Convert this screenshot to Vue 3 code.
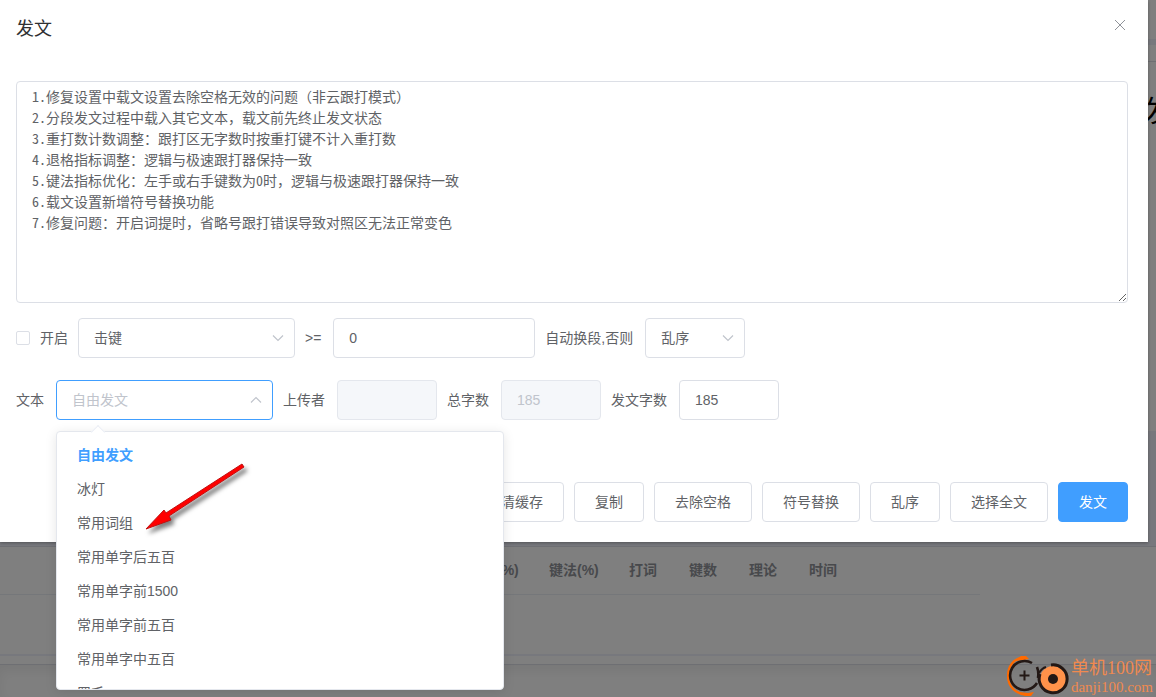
<script setup>
import { ref } from 'vue'

const content = ref([
  '1.修复设置中载文设置去除空格无效的问题（非云跟打模式）',
  '2.分段发文过程中载入其它文本，载文前先终止发文状态',
  '3.重打数计数调整：跟打区无字数时按重打键不计入重打数',
  '4.退格指标调整：逻辑与极速跟打器保持一致',
  '5.键法指标优化：左手或右手键数为0时，逻辑与极速跟打器保持一致',
  '6.载文设置新增符号替换功能',
  '7.修复问题：开启词提时，省略号跟打错误导致对照区无法正常变色'
].join('\n'))

const enabled = ref(false)
const metric = ref('击键')
const threshold = ref('0')
const fallback = ref('乱序')
const source = ref('自由发文')
const uploader = ref('')
const total = ref('185')
const amount = ref('185')

const options = ['自由发文', '冰灯', '常用词组', '常用单字后五百', '常用单字前1500', '常用单字前五百', '常用单字中五百', '罗毛']
const actions = ['清缓存', '复制', '去除空格', '符号替换', '乱序', '选择全文']
const columns = ['键准(%)', '键法(%)', '打词', '键数', '理论', '时间']
</script>

<template>
  <div class="page">
    <div class="backdrop">
      <div class="navbar"></div>
      <div class="titlebar"></div>
      <div class="article"><span>发</span></div>
      <div class="splitter"></div>
      <div class="records">
        <table>
          <thead>
            <tr>
              <th class="lead"></th>
              <th v-for="c in columns" :key="c" :class="{ wide: c.includes('%') }">{{ c }}</th>
              <th class="tail"></th>
            </tr>
          </thead>
        </table>
      </div>
      <div class="footbar"></div>
      <div class="below"></div>
    </div>
    <div class="mask"></div>

    <section class="dialog" role="dialog" aria-labelledby="dialog-title">
      <header>
        <h1 id="dialog-title">发文</h1>
        <button class="close" type="button" aria-label="关闭">
          <svg viewBox="0 0 12 12" width="12" height="12"><path d="M1 1 11 11M11 1 1 11" /></svg>
        </button>
      </header>

      <textarea v-model="content" aria-label="发文内容" spellcheck="false"></textarea>

      <div class="row">
        <label class="check"><input v-model="enabled" type="checkbox" />开启</label>
        <div class="select medium">
          <select v-model="metric" aria-label="指标"><option>击键</option></select>
          <svg viewBox="0 0 12 12"><path d="M1 3.5 6 8.5 11 3.5" /></svg>
        </div>
        <label class="caption" for="threshold">&gt;=</label>
        <input id="threshold" v-model="threshold" class="field large" type="text" />
        <label class="caption" for="fallback">自动换段,否则</label>
        <div class="select small">
          <select id="fallback" v-model="fallback"><option>乱序</option></select>
          <svg viewBox="0 0 12 12"><path d="M1 3.5 6 8.5 11 3.5" /></svg>
        </div>
      </div>

      <div class="row second">
        <label class="caption" for="source">文本</label>
        <div class="select medium open">
          <select id="source" v-model="source">
            <option v-for="o in options" :key="o">{{ o }}</option>
          </select>
          <svg viewBox="0 0 12 12"><path d="M1 8.5 6 3.5 11 8.5" /></svg>
          <div class="dropdown">
            <ul role="listbox" aria-label="文本">
              <li v-for="o in options" :key="o" role="option" :aria-selected="o === source" :class="{ selected: o === source }">{{ o }}</li>
            </ul>
            <svg class="arrow" viewBox="0 0 102 70" aria-hidden="true">
              <path d="M99 2 101 5 26 54 28 58 3 67 21 48 23 51Z" />
            </svg>
          </div>
        </div>
        <label class="caption" for="uploader">上传者</label>
        <input id="uploader" v-model="uploader" class="field small" type="text" disabled />
        <label class="caption" for="total">总字数</label>
        <input id="total" v-model="total" class="field small" type="text" disabled />
        <label class="caption" for="amount">发文字数</label>
        <input id="amount" v-model="amount" class="field small" type="text" />
      </div>

      <footer>
        <button v-for="a in actions" :key="a" type="button">{{ a }}</button>
        <button class="primary" type="button">发文</button>
      </footer>
    </section>

    <div class="brand">
      <svg viewBox="0 0 66 42" width="66" height="42" aria-hidden="true">
        <path d="M22 2C10 3 5 12 5 21c0 11 8 18 19 19" fill="none" stroke="#ff6a00" stroke-width="2.200" />
        <path d="M12 6 18 1h5l3 3-6 1zM16 37l9 1 6-1-3 4h-6z" fill="#ff6a00" />
        <path d="M29 8A14.500 14.500 0 1 0 34 28M34 12q2 5 1 11" fill="none" stroke="#231815" stroke-width="2.600" />
        <path d="M21.500 15.500v10M16.500 20.500h10" stroke="#231815" stroke-width="2" />
        <circle cx="50" cy="24" r="13" fill="#ff924a" />
        <path d="M48 10A14 14 0 1 1 37 19" fill="none" stroke="#231815" stroke-width="3" />
        <path d="M36 18q3-5 7-6" fill="none" stroke="#231815" stroke-width="2" />
        <circle cx="50" cy="24" r="5" fill="#231815" />
      </svg>
      <div class="brand-text"><span>单机100网</span><span class="url">danji100.com</span></div>
    </div>
  </div>
</template>

<style>
html, body, #app { height: 100%; }
body { margin: 0; overflow: hidden; }
</style>

<style scoped>
* { box-sizing: border-box; }
.page {
  position: relative;
  height: 100%;
  overflow: hidden;
  color: #606266;
  font: 14px/20px "Liberation Sans", "Noto Sans CJK SC", sans-serif;
}
.backdrop {
  position: absolute;
  inset: 0;
  display: flex;
  flex-direction: column;
  background: #fff;
}
.mask { position: absolute; inset: 0; background: rgba(0, 0, 0, .5); }
.navbar { height: 39px; }
.titlebar { height: 23px; border-top: 6px solid #eef0fa; border-bottom: 1px solid #dcdfe6; }
.article { flex: 1; color: #000; font-size: 30px; line-height: 98px; text-align: right; }
.article span { margin-right: -18px; }
.splitter { height: 116px; background: #eef0fa; border-bottom: 1px solid #dcdfe6; }
.records { height: 107px; }
.records table { width: 980px; table-layout: fixed; border-collapse: collapse; }
.records th { width: 60px; height: 47px; padding: 0 10px; border-bottom: 1px solid #ebeef5; color: #909399; text-align: left; white-space: nowrap; }
.records .wide { width: 80px; }
.records .lead { width: 459px; }
.records .tail { width: auto; }
.footbar { height: 11px; border-top: 2px solid #eef0fa; border-bottom: 1px solid #dcdfe6; }
.below { height: 32px; box-shadow: inset 0 6px 12px rgba(0, 0, 0, .06); }

.dialog {
  position: relative;
  width: calc(100% - 8px);
  padding: 0 20px 20px 16px;
  background: #fff;
  box-shadow: 0 1px 3px rgba(0, 0, 0, .3);
}
header { display: flex; align-items: flex-start; justify-content: space-between; height: 81px; padding-top: 17px; }
h1 { margin: 0; color: #303133; font-size: 18px; font-weight: 400; line-height: 24px; }
.close { display: flex; margin: 2px; padding: 0; border: 0; background: none; }
.close path { fill: none; stroke: #909399; stroke-width: 1; }
textarea {
  display: block;
  width: 100%;
  height: 222px;
  padding: 4px 15px;
  resize: vertical;
  border: 1px solid #dcdfe6;
  border-radius: 4px;
  outline: none;
  color: #606266;
  background: #fff;
  font: 14px/21px "Noto Sans Mono CJK SC", "Noto Sans CJK SC", monospace;
}
.row { display: flex; align-items: center; gap: 10px; margin-top: 15px; }
.row.second { margin-top: 22px; }
label { white-space: nowrap; }
.caption { margin-right: 2px; }
.check { display: flex; align-items: center; gap: 10px; }
.check input { appearance: none; width: 14px; height: 14px; margin: 0; border: 1px solid #dcdfe6; border-radius: 2px; background: #fff; }
.field, select {
  height: 40px;
  padding: 0 15px;
  border: 1px solid #dcdfe6;
  border-radius: 4px;
  outline: none;
  background: #fff;
  color: #606266;
  font: inherit;
}
select { width: 100%; appearance: none; }
.select { position: relative; }
.select > svg { position: absolute; top: 14px; right: 11px; width: 12px; height: 12px; pointer-events: none; }
.select > svg path { fill: none; stroke: #c0c4cc; stroke-width: 1.2; }
.small { width: 100px; }
.medium { width: 217px; }
.large { width: 202px; }
.field:disabled { border-color: #e4e7ed; background: #f5f7fa; color: #c0c4cc; }
.open select { border-color: #409eff; color: #c0c4cc; }
.dropdown {
  position: absolute;
  z-index: 2;
  top: 51px;
  left: 0;
  width: 448px;
  height: 259px;
  border: 1px solid #e4e7ed;
  border-radius: 4px;
  background: #fff;
  box-shadow: 0 2px 12px rgba(0, 0, 0, .1);
}
.dropdown::before {
  content: "";
  position: absolute;
  top: -5px;
  left: 36px;
  width: 9px;
  height: 9px;
  border: 1px solid #ebeef5;
  border-width: 1px 0 0 1px;
  background: #fff;
  transform: rotate(45deg);
}
ul { height: 257px; margin: 0; padding: 6px 0; overflow: hidden; list-style: none; }
li { height: 34px; padding: 0 20px; line-height: 34px; }
.selected { color: #409eff; font-weight: 700; }
.arrow { position: absolute; top: 30px; left: 86px; width: 102px; height: 70px; overflow: visible; filter: drop-shadow(3px 4px 2px rgba(0, 0, 0, .5)); }
.arrow path { fill: #f00; stroke: #c01010; stroke-width: 1; stroke-linejoin: round; }
footer { display: flex; justify-content: flex-end; gap: 10px; margin-top: 62px; }
footer button { height: 40px; padding: 0 20px; border: 1px solid #dcdfe6; border-radius: 4px; background: #fff; color: #606266; font: inherit; }
footer .primary { border-color: #409eff; background: #409eff; color: #fff; }
.brand { position: absolute; right: 3px; bottom: 0; display: flex; align-items: flex-end; gap: 2px; color: #f08a50; }
.brand-text { display: flex; flex-direction: column; font: 18px/20px "Liberation Serif", "Noto Sans CJK SC", serif; }
.url { font-size: 15px; line-height: 19px; }
</style>
